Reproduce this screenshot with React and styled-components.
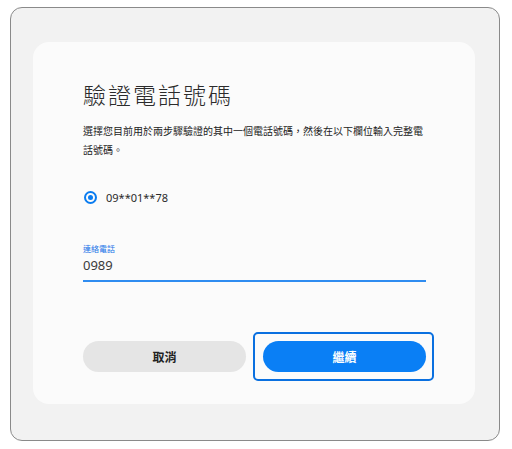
import React, { useState } from 'react';
import styled, { createGlobalStyle } from 'styled-components';

const GlobalStyle = createGlobalStyle`
  html, body {
    margin: 0;
    padding: 0;
    background: #ffffff;
    font-family: "Noto Sans", "Noto Sans CJK TC", sans-serif;
  }
`;

const Page = styled.div`
  padding: 7px 12px 8px 10px;
`;

const Frame = styled.div`
  box-sizing: border-box;
  height: 434px;
  border: 1px solid #8a8a8a;
  border-radius: 12px;
  background: #f2f2f2;
  padding: 34px 24px 36px 22px;
`;

const Card = styled.div`
  box-sizing: border-box;
  height: 362px;
  background: #fbfbfb;
  border-radius: 16px;
  padding: 38px 49px 0 50px;
  display: flex;
  flex-direction: column;
`;

const Title = styled.h1`
  margin: 0;
  font-size: 23px;
  line-height: 30px;
  font-weight: 300;
  color: #2b2b2b;
  letter-spacing: 2px;
`;

const Description = styled.p`
  margin: 12px 0 0;
  font-size: 10px;
  line-height: 19px;
  color: #222;
`;

const RadioRow = styled.label`
  display: flex;
  align-items: center;
  gap: 9px;
  margin-top: 27px;
  height: 20px;
  font-size: 11px;
  color: #2a2a2a;
`;

const RadioDot = styled.span`
  box-sizing: border-box;
  width: 13px;
  height: 13px;
  border-radius: 50%;
  border: 2px solid #0a7cf0;
  display: flex;
  align-items: center;
  justify-content: center;
  margin-left: 1px;

  &::after {
    content: '';
    width: 5px;
    height: 5px;
    border-radius: 50%;
    background: #0a7cf0;
  }
`;

const Field = styled.div`
  margin-top: 37px;
  display: flex;
  flex-direction: column;
`;

const FieldLabel = styled.span`
  font-size: 8px;
  line-height: 10px;
  color: #1a73e8;
`;

const FieldInput = styled.input`
  border: none;
  outline: none;
  background: transparent;
  padding: 0 0 5px;
  margin-top: 1px;
  font-family: inherit;
  font-size: 13px;
  line-height: 20px;
  height: 20px;
  color: #3a3a3a;
  border-bottom: 2px solid #2f8cf0;
  caret-color: #222;
`;

const Actions = styled.div`
  margin-top: auto;
  margin-bottom: 32px;
  display: grid;
  grid-template-columns: 1fr 1fr;
  gap: 17px;
  align-items: center;
`;

const Button = styled.button`
  flex: 1;
  height: 31px;
  border: none;
  border-radius: 16px;
  font-family: inherit;
  font-size: 12px;
  font-weight: 700;
  cursor: pointer;
  background: ${({ $primary }) => ($primary ? '#0a7ff5' : '#e5e5e5')};
  color: ${({ $primary }) => ($primary ? '#ffffff' : '#222')};
`;

const FocusRing = styled.div`
  border: 2px solid #0a70e0;
  border-radius: 5px;
  padding: 7px 6px 7px 8px;
  margin: -9px -8px -9px -10px;
  display: flex;
`;

export default function App() {
  const [value, setValue] = useState('0989');

  return (
    <Page>
      <GlobalStyle />
      <Frame>
        <Card>
          <Title>驗證電話號碼</Title>
          <Description>
            選擇您目前用於兩步驟驗證的其中一個電話號碼，然後在以下欄位輸入完整電話號碼。
          </Description>
          <RadioRow>
            <RadioDot />
            09**01**78
          </RadioRow>
          <Field>
            <FieldLabel>連絡電話</FieldLabel>
            <FieldInput value={value} onChange={(e) => setValue(e.target.value)} autoFocus />
          </Field>
          <Actions>
            <Button>取消</Button>
            <FocusRing>
              <Button $primary>繼續</Button>
            </FocusRing>
          </Actions>
        </Card>
      </Frame>
    </Page>
  );
}
